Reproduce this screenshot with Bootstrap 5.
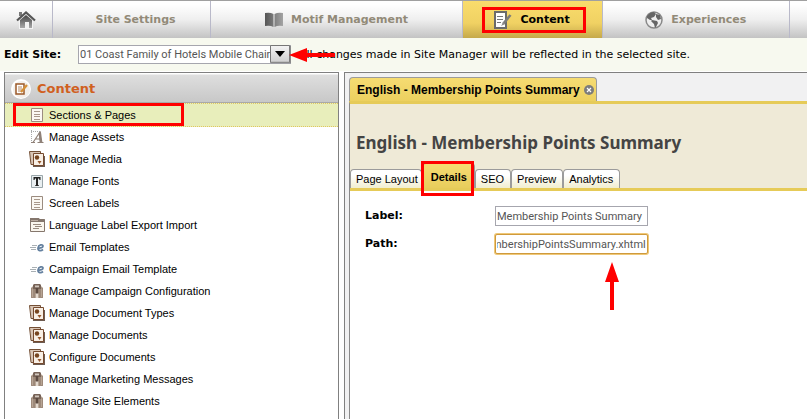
<!DOCTYPE html>
<html lang="en">
<head>
<meta charset="utf-8">
<meta name="viewport" content="width=device-width, initial-scale=1">
<title>Site Manager - Content</title>
<link href="https://cdn.jsdelivr.net/npm/bootstrap@5.3.0/dist/css/bootstrap.min.css" rel="stylesheet">
<style>
  body { font: 11px/16px "Liberation Sans", Arial, sans-serif; color: #000; background: #fff; overflow-x: hidden; }
  .wide-face { font-family: "DejaVu Sans", Verdana, sans-serif; }
  .top-bar { height: 38px; border-top: 1px solid #a0a0a0; background: linear-gradient(#fff 10%, #efefef 50%, #c3c3c3); }
  .top-bar a { flex: 1 1 0; gap: 8px; font-size: 11px; font-weight: bold; color: #928a78; border-right: 1px solid #b9b9c9; white-space: nowrap; }
  .top-bar a.w-home { flex-grow: 52; }
  .top-bar a.w-site { flex-grow: 151; padding-left: 8px; }
  .top-bar a.w-motif { flex-grow: 252; }
  .top-bar a.w-content { flex-grow: 140; color: #000; background: linear-gradient(#f9dc6c, #f0d163 60%, #c5a94b); }
  .top-bar a.w-exp { flex-grow: 188; }
  .top-bar .w-rest { flex: 17 1 0; }
  .mark-box { position: absolute; border: 3px solid #f00; pointer-events: none; z-index: 3; }
  .mark-content { inset: 6px 16px 5px 19px; }
  .mark-sections { inset: -1px auto 0 8px; width: 171px; }
  .mark-details { inset: -3px 0 -8px -2px; }
  .edit-row { height: 33px; padding-left: 4px; background: #f7f9ef; white-space: nowrap; }
  .edit-row label { width: 74px; font-weight: bold; }
  .site-pick { width: 213px; height: 19px; }
  .site-pick select { appearance: none; width: 100%; height: 19px; padding: 0 18px 0 1px; font: 11px/16px Roboto, Arial, sans-serif; color: #555; background: #fff; border: 1px solid #a6a6ae; border-radius: 0; }
  .pick-arrow { position: absolute; right: 0; top: 0; width: 22px; height: 19px; pointer-events: none; }
  .arrow-left { position: absolute; left: 211px; top: 3px; z-index: 3; }
  .side-panel { flex: 0 0 335px; margin: 1px 5px 0 4px; border: 1px solid #808080; border-bottom: 0; }
  .side-head { height: 30px; gap: 6px; padding: 3px 4px 0 6px; margin: 0; font-size: 13px; font-weight: bold; color: #d0601f; background: linear-gradient(#fff 1px, #dedede 2px, #c8c8c8); border-bottom: 1px solid #a9a9a9; }
  .side-list a { height: 22px; gap: 4px; padding-left: 24px; color: #000; }
  .side-list a.picked { height: 24px; margin-bottom: -1px; background: #e8eebb; border: 1px dotted #e0c860; border-width: 1px 0; }
  .work-panel { min-width: 0; margin-top: 1px; padding: 4px 0 0 4px; border: 1px solid #808080; border-width: 1px 0 0 1px; background: #f1f1f2; }
  .doc-tab { height: 24px; gap: 4px; padding: 0 2px 0 7px; font-size: 12px; font-weight: bold; background: linear-gradient(#f6dc72, #ecd05f); border: 1px solid #9b9b9b; border-bottom: 0; border-radius: 4px 4px 0 0; }
  .doc-tab button { line-height: 0; }
  .doc-body { border-top: 3px solid #e6cb58; border-left: 1px solid #8a8a8a; background: #efead7; }
  .doc-title { margin: 0; padding: 28px 6px 9px; font: bold 17px/22px "Noto Sans", Tahoma, sans-serif; color: #444; }
  .sub-tabs { height: 25px; }
  .sub-tabs a { height: 19px; padding: 1px 6px 0 5px; color: #000; white-space: nowrap; background: linear-gradient(#fff 30%, #f1eecf); border: 1px solid #9b9b9b; border-bottom: 0; border-radius: 4px 4px 0 0; }
  .sub-tabs a:first-child { padding-right: 3px; }
  .sub-tabs a.picked { height: 25px; padding: 5px 7px 0 8px; font-weight: bold; background: linear-gradient(#f6dc72, #e8cd5c); }
  .sub-body { padding: 15px 15px 0; border-top: 3px solid #e6cb58; background: #fff; }
  .form-line { height: 28px; }
  .form-line label { flex: 0 0 130px; font-weight: bold; line-height: 20px; }
  .form-line input { width: 153px; height: 20px; padding: 0 1px; font-family: Roboto, Arial, sans-serif; color: #555; border: 1px solid #a6a6ae; outline: 0; }
  .form-line input.hot { border-color: #cf9a3d; border-radius: 2px; box-shadow: 0 0 0 1px #efc878; }
  .arrow-up { position: absolute; left: 110px; top: 28px; }
</style>
<script src="https://cdn.jsdelivr.net/npm/bootstrap@5.3.0/dist/js/bootstrap.bundle.min.js"></script>
</head>
<body class="d-flex flex-column min-vh-100">

<svg class="d-none" aria-hidden="true">
  <symbol id="i-page" viewBox="0 0 16 16"><path d="M2.500 1.500h11v13h-11z" fill="#fbf8f3" stroke="#9b8c80"/><path d="M5 4.500h6M5 7.500h6M5 9.500h6M5 12.500h6" stroke="#a8988b"/></symbol>
  <symbol id="i-asset" viewBox="0 0 16 16"><path d="M2.500 1v13M2 2.500h9" stroke="#aaa" stroke-dasharray="1 1" fill="none"/><path d="M2 13.500h4M8.500 13.500h6M4 13.500L11 3M6.500 10h5" stroke="#8f8178" stroke-width="1.200" fill="none"/><path d="M9.500 4l2.300-2L13.500 14h-2.800z" fill="#8f8178"/></symbol>
  <symbol id="i-media" viewBox="0 0 16 16"><path d="M3 5h13v11H4z" fill="#6d5b50"/><path d="M.5.500h11v13H2z" fill="#d9c6b6" stroke="#745036"/><path d="M4.500 2.500h10v12h-10z" fill="#f8efe5" stroke="#764a2e"/><circle cx="8" cy="6.500" r="2.200" fill="#77451f"/><path d="M8.500 10h4L10.500 13z" fill="#95572c"/></symbol>
  <symbol id="i-font" viewBox="0 0 16 16"><path d="M2.500 2.500h11v12h-11z" fill="#e9eff1" stroke="#9aa6aa"/><path d="M4.500 4h7v3h-1l-.5-1.500H9V12l1 .5v.5H6v-.5l1-.5V5.500H6L5.500 7h-1z" fill="#222"/></symbol>
  <symbol id="i-lang" viewBox="0 0 16 16"><path d="M1.500 2.500h14v12h-14z" fill="#faf6ee" stroke="#85776d"/><path d="M1 1h9l1 1.500h5V5H1z" fill="#85776d"/><path d="M2 3.500h7" stroke="#b9aba0"/><path d="M4 7.500h8M6 9.500h7M4 11.500h6" stroke="#998b80"/></symbol>
  <symbol id="i-mail" viewBox="0 0 16 16"><path d="M3 6.500h5M1 8.500h6M2 10.500h5" stroke="#a9b0b4"/><path d="M9 9c3 .3 5-.4 5-2 0-2-4.500-1.600-5 2-.2 3 3 3.300 5 1.500" fill="none" stroke="#64809f" stroke-width="1.800"/></symbol>
  <symbol id="i-clip" viewBox="0 0 16 16"><path d="M2 5l2-2h8l2 2v10H2z" fill="#bda998"/><path d="M2.500 5v9.500h2V5zM11.500 5v9.500h2V5z" fill="#b8a595" stroke="#8c7768" stroke-width=".6"/><path d="M4 2l1-1h6l1 1v4H4z" fill="#776357"/><path d="M6 2.500h4v1.800H6z" fill="#d2c8bf"/><path d="M5 6h1.700v9H5zM9.300 6H11v9H9.300z" fill="#9c8878"/><path d="M6.700 10h2.600v5H6.700z" fill="#e4dacf"/><path d="M6.700 5h2.600v5.500H6.700z" fill="#5d4b41"/></symbol>
</svg>

<nav class="top-bar wide-face d-flex flex-shrink-0" aria-label="Main">
  <a href="#" class="w-home d-flex align-items-center justify-content-center text-decoration-none" aria-label="Home">
    <svg width="20" height="20" viewBox="0 0 20 20"><defs><linearGradient id="hg" x2="0" y2="1"><stop stop-color="#444"/><stop offset="1" stop-color="#aaa"/></linearGradient></defs><path d="M3 11h14v8H3z" fill="#f3f3f3"/><path d="M4 10l6-5 6 5v8h-3v-6H9v6H4z" fill="url(#hg)"/><path d="M3 2h3v4H3z" fill="#777"/><path d="M1 10.500L10 2.500l9 8" fill="none" stroke="#565656" stroke-width="2.200"/></svg>
  </a>
  <a href="#" class="w-site d-flex align-items-center justify-content-center text-decoration-none">Site Settings</a>
  <a href="#" class="w-motif d-flex align-items-center justify-content-center text-decoration-none">
    <svg width="18" height="16" viewBox="0 0 18 16"><defs><linearGradient id="bg1"><stop stop-color="#555"/><stop offset="1" stop-color="#a4a4a4"/></linearGradient></defs><path d="M0 1q5-1 8.500 1v13Q5 13 0 14zM9.500 2Q13 0 18 1v13q-5-1-8.500 1z" fill="url(#bg1)"/></svg>
    Motif Management</a>
  <a href="#" class="w-content position-relative d-flex align-items-center justify-content-center text-decoration-none" aria-current="page">
    <svg width="18" height="18" viewBox="0 0 18 18"><path d="M1 1h11v16H1z" fill="#fff" stroke="#6b6b6b" stroke-width="2"/><path d="M3 5.500h6M3 8.500h6M3 11.500h4" stroke="#777"/><path d="M16.500 4L9 13" stroke="#7c7c7c" stroke-width="2.600"/><path d="M9.500 11L7 15l4-2z" fill="#8b8b8b"/></svg>
    Content<span class="mark-box mark-content"></span></a>
  <a href="#" class="w-exp d-flex align-items-center justify-content-center text-decoration-none">
    <svg width="18" height="18" viewBox="0 0 18 18"><circle cx="9" cy="9" r="8" fill="#eee" stroke="#888" stroke-width="1.500"/><path d="M2 5q3-4 7-4l2 2-2 3-3 1 1 2-2 0-3-2zM11 3l4 1 1 4-3 1-2-3zM7 9l5 1 1 2-2 4-1 1-1-4-3-3z" fill="#666"/></svg>
    Experiences</a>
  <span class="w-rest"></span>
</nav>

<div class="edit-row wide-face d-flex align-items-center flex-shrink-0">
  <label for="site">Edit Site:</label>
  <div class="site-pick position-relative">
    <select id="site"><option>01 Coast Family of Hotels Mobile Chair</option></select>
    <svg class="pick-arrow" viewBox="0 0 22 19"><defs><linearGradient id="pg" x2="0" y2="1"><stop stop-color="#f4f4f4"/><stop offset="1" stop-color="#cfcfcf"/></linearGradient></defs><path d="M1.500.5h19v17h-19z" fill="url(#pg)" stroke="#777"/><path d="M2 17.500h19.500V1" fill="none" stroke="#8a8a8a" stroke-width="1.500"/><path d="M6 6h10l-5 6z" fill="#000"/></svg>
    <svg class="arrow-left" width="48" height="14" viewBox="0 0 48 14"><path d="M0 7L18 0v5h28v4H18v5z" fill="#f00"/></svg>
  </div>
  <span class="ps-2">All changes made in Site Manager will be reflected in the selected site.</span>
</div>

<main class="d-flex flex-grow-1">
  <aside class="side-panel">
    <h2 class="side-head wide-face d-flex align-items-center">
      <svg width="20" height="20" viewBox="0 0 20 20"><circle cx="10" cy="10" r="10" fill="#fff"/><circle cx="10.500" cy="10.500" r="8.500" fill="#f2efea"/><path d="M5 5h8v10H5z" fill="#fff" stroke="#9c5a2a" stroke-width="1.500"/><path d="M7 8h4M7 10h4M7 12h3" stroke="#b88a62"/><path d="M16 6l-6 7" stroke="#d58f35" stroke-width="2.200"/></svg>
      Content</h2>
    <nav class="side-list d-flex flex-column" aria-label="Content">
      <a href="#" class="picked position-relative d-flex align-items-center text-decoration-none" aria-current="page"><svg width="16" height="16"><use href="#i-page"/></svg>Sections &amp; Pages<span class="mark-box mark-sections"></span></a>
      <a href="#" class="d-flex align-items-center text-decoration-none"><svg width="16" height="16"><use href="#i-asset"/></svg>Manage Assets</a>
      <a href="#" class="d-flex align-items-center text-decoration-none"><svg width="16" height="16"><use href="#i-media"/></svg>Manage Media</a>
      <a href="#" class="d-flex align-items-center text-decoration-none"><svg width="16" height="16"><use href="#i-font"/></svg>Manage Fonts</a>
      <a href="#" class="d-flex align-items-center text-decoration-none"><svg width="16" height="16"><use href="#i-page"/></svg>Screen Labels</a>
      <a href="#" class="d-flex align-items-center text-decoration-none"><svg width="16" height="16"><use href="#i-lang"/></svg>Language Label Export Import</a>
      <a href="#" class="d-flex align-items-center text-decoration-none"><svg width="16" height="16"><use href="#i-mail"/></svg>Email Templates</a>
      <a href="#" class="d-flex align-items-center text-decoration-none"><svg width="16" height="16"><use href="#i-mail"/></svg>Campaign Email Template</a>
      <a href="#" class="d-flex align-items-center text-decoration-none"><svg width="16" height="16"><use href="#i-clip"/></svg>Manage Campaign Configuration</a>
      <a href="#" class="d-flex align-items-center text-decoration-none"><svg width="16" height="16"><use href="#i-media"/></svg>Manage Document Types</a>
      <a href="#" class="d-flex align-items-center text-decoration-none"><svg width="16" height="16"><use href="#i-media"/></svg>Manage Documents</a>
      <a href="#" class="d-flex align-items-center text-decoration-none"><svg width="16" height="16"><use href="#i-media"/></svg>Configure Documents</a>
      <a href="#" class="d-flex align-items-center text-decoration-none"><svg width="16" height="16"><use href="#i-clip"/></svg>Manage Marketing Messages</a>
      <a href="#" class="d-flex align-items-center text-decoration-none"><svg width="16" height="16"><use href="#i-clip"/></svg>Manage Site Elements</a>
    </nav>
  </aside>

  <section class="work-panel d-flex flex-column flex-grow-1">
    <div class="d-flex">
      <div class="doc-tab d-flex align-items-center"><span>English - Membership Points Summary</span>
        <button type="button" class="border-0 bg-transparent p-0" aria-label="Close tab"><svg width="10" height="10" viewBox="0 0 10 10"><circle cx="5" cy="5" r="5" fill="#7d7d7d"/><path d="M3 3l4 4M7 3L3 7" stroke="#fff" stroke-width="1.200"/></svg></button>
      </div>
    </div>
    <div class="doc-body d-flex flex-column flex-grow-1">
      <h1 class="doc-title">English - Membership Points Summary</h1>
      <nav class="sub-tabs d-flex align-items-end" aria-label="Page">
        <a href="#" class="text-decoration-none">Page Layout</a>
        <a href="#" class="picked position-relative text-decoration-none" aria-current="page">Details<span class="mark-box mark-details"></span></a>
        <a href="#" class="text-decoration-none">SEO</a>
        <a href="#" class="text-decoration-none">Preview</a>
        <a href="#" class="text-decoration-none">Analytics</a>
      </nav>
      <form class="sub-body flex-grow-1">
        <div class="form-line d-flex align-items-start"><label for="lbl" class="wide-face">Label:</label><input id="lbl" type="text" value="Membership Points Summary"></div>
        <div class="form-line d-flex align-items-start"><label for="path" class="wide-face">Path:</label>
          <div class="position-relative"><input id="path" class="hot" type="text" value="/MembershipPointsSummary.xhtml">
            <svg class="arrow-up" width="14" height="49" viewBox="0 0 14 49"><path d="M7 0l7 20H9v28H5V20H0z" fill="#f00"/></svg></div>
        </div>
      </form>
    </div>
  </section>
</main>
<script>
  // Keep the end of a long path in view.
  const path = document.getElementById('path');
  path.scrollLeft = path.scrollWidth;
</script>
</body>
</html>
